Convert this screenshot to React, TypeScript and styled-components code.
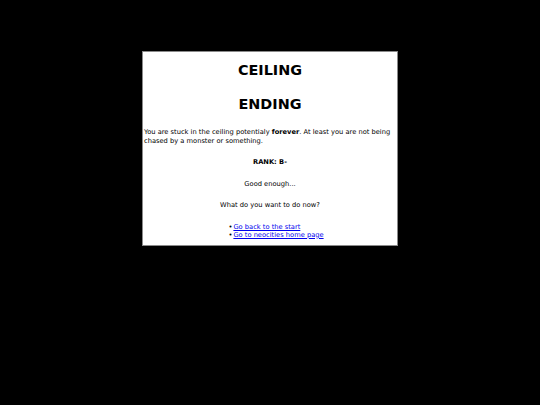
import styled, { createGlobalStyle } from 'styled-components';

const GlobalStyle = createGlobalStyle`
  html, body {
    margin: 0;
    padding: 0;
    background: #000;
  }
  body {
    font-family: "DejaVu Sans", Verdana, sans-serif;
  }
`;

const Page = styled.div`
  width: 540px;
  height: 405px;
  padding-top: 51px;
  box-sizing: border-box;
`;

const Card = styled.main`
  width: 256px;
  margin: 0 auto;
  box-sizing: border-box;
  background: #fff;
  border: 1px solid #8a8a8a;
  padding: 8px 1px 6px;
  color: #000;
  font-size: 6.7px;
  line-height: 9px;
`;

const Title = styled.h1<{ $gap: number }>`
  margin: 0 0 ${({ $gap }) => $gap}px;
  font-size: 14.4px;
  line-height: 20px;
  text-align: center;
  font-weight: bold;
`;

const Text = styled.p<{ $center?: boolean; $bold?: boolean }>`
  margin: 0 0 12.5px;
  text-align: ${({ $center }) => ($center ? 'center' : 'left')};
  font-weight: ${({ $bold }) => ($bold ? 'bold' : 'normal')};
`;

const Links = styled.ul`
  width: fit-content;
  margin: 0 auto;
  padding: 0 0 0 12px;
  list-style: none;
  line-height: 8px;
`;

const Item = styled.li`
  display: flex;

  &::before {
    content: '•';
    width: 5px;
    flex: none;
  }
`;

const Link = styled.a`
  color: #0000ee;
  text-decoration: underline;
`;

export default function App() {
  return (
    <>
      <GlobalStyle />
      <Page>
        <Card>
          <Title $gap={14}>CEILING</Title>
          <Title $gap={13.5}>ENDING</Title>
          <Text>
            You are stuck in the ceiling potentialy <b>forever</b>. At least you are not being
            chased by a monster or something.
          </Text>
          <Text $center $bold>RANK: B-</Text>
          <Text $center>Good enough...</Text>
          <Text $center>What do you want to do now?</Text>
          <Links>
            <Item><Link href="#">Go back to the start</Link></Item>
            <Item><Link href="#">Go to neocities home page</Link></Item>
          </Links>
        </Card>
      </Page>
    </>
  );
}
